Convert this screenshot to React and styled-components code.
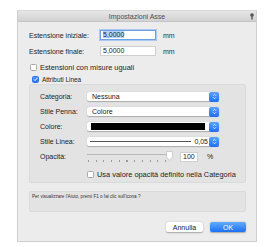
import React from 'react';
import styled, { createGlobalStyle } from 'styled-components';

const GlobalStyle = createGlobalStyle`
  * { box-sizing: border-box; }
  html, body { margin: 0; padding: 0; background: #fff; }
  body { font-family: "Liberation Sans", Arial, sans-serif; color: #222; }
`;

const Dialog = styled.div`
  margin: 10px 0 0 17px;
  width: 240px;
  height: 232px;
  background: #ececec;
  border: 1px solid #cfcfcf;
  border-top-color: #d8d8d8;
  display: flex;
  flex-direction: column;
`;

const TitleBar = styled.div`
  height: 11px;
  display: grid;
  grid-template-columns: 1fr auto 1fr;
  align-items: center;
  background: linear-gradient(#e6e6e6, #d2d2d2);
  border-bottom: 1px solid #c4c4c4;
  font-size: 7px;
  color: #4d4d4d;
`;

const Title = styled.span`
  grid-column: 2;
  line-height: 11px;
`;

const HelpIcon = styled.svg`
  justify-self: end;
  margin-right: 2px;
`;

const Body = styled.div`
  padding: 5px 10px 0 11px;
  display: flex;
  flex-direction: column;
  font-size: 7px;
`;

const FieldRow = styled.div`
  display: flex;
  align-items: center;
  height: 16px;
`;

const Label = styled.span`
  width: ${p => p.$w}px;
  flex: none;
  color: #222;
`;

const TextInput = styled.div`
  width: 56px;
  height: 10px;
  background: #fff;
  border: 1px solid ${p => (p.$focus ? '#6fa0e6' : '#d0d0d0')};
  box-shadow: ${p => (p.$focus ? '0 0 0 1px #a9c8f2' : 'none')};
  padding-left: 2px;
  font-size: 7px;
  line-height: 8px;
  color: #222;
`;

const Selected = styled.span`
  background: #b5d3fb;
`;

const Unit = styled.span`
  margin-left: 7px;
  color: #333;
`;

const CheckRow = styled.div`
  display: flex;
  align-items: center;
  height: ${p => p.$h}px;
  margin-top: ${p => p.$mt || 0}px;
  padding-left: ${p => p.$pl || 0}px;
`;

const Box = styled.span`
  width: 7px;
  height: 7px;
  flex: none;
  border-radius: 1.5px;
  border: 1px solid ${p => (p.$on ? '#2b74ef' : '#a8a8a8')};
  background: ${p => (p.$on ? 'linear-gradient(#4e95f8, #246ef0)' : '#fff')};
  display: flex;
  align-items: center;
  justify-content: center;
  margin-right: ${p => p.$gap}px;
`;

const CheckText = styled.span`
  font-size: ${p => p.$fs}px;
  color: #222;
`;

const Group = styled.div`
  height: 99px;
  background: #e3e3e3;
  border: 1px solid #dadada;
  border-radius: 2px;
  padding: 4px 0 0 10px;
  display: flex;
  flex-direction: column;
`;

const GroupRow = styled.div`
  display: flex;
  align-items: center;
  height: 15px;
`;

const Select = styled.div`
  width: 132px;
  height: 9px;
  background: #fff;
  border-radius: 2px;
  box-shadow: 0 0.5px 1px rgba(0, 0, 0, 0.25);
  display: flex;
  align-items: center;
`;

const SelectBody = styled.div`
  flex: 1;
  height: 100%;
  display: flex;
  align-items: center;
  padding: 0 ${p => p.$pr || 0}px 0 ${p => p.$pl}px;
  font-size: 7px;
  color: #222;
`;

const Swatch = styled.div`
  flex: 1;
  height: 7px;
  background: #000;
`;

const LineSample = styled.div`
  flex: 1;
  height: 1px;
  background: #555;
  margin-right: 3px;
`;

const Stepper = styled.div`
  width: 10px;
  height: 10px;
  flex: none;
  border-radius: 2px;
  background: linear-gradient(#5aa3fb, #1e6ef3);
  display: flex;
  align-items: center;
  justify-content: center;
`;

const Slider = styled.div`
  position: relative;
  width: 86px;
  height: 11px;
`;

const Track = styled.div`
  position: absolute;
  left: 0;
  right: 4px;
  top: 3px;
  height: 1px;
  background: #b8b8b8;
`;

const Ticks = styled.div`
  position: absolute;
  left: 1px;
  right: 0;
  top: 9px;
  height: 2px;
  background: repeating-linear-gradient(
    to right,
    #9a9a9a 0,
    #9a9a9a 1px,
    transparent 1px,
    transparent 7.7px
  );
`;

const Thumb = styled.svg`
  position: absolute;
  left: 79px;
  top: 0;
`;

const SmallInput = styled.div`
  width: 18px;
  height: 10px;
  margin-left: 7px;
  background: #fff;
  border: 1px solid #d0d0d0;
  padding-left: 2px;
  font-size: 7px;
  line-height: 8px;
`;

const Percent = styled.span`
  margin-left: 9px;
  font-size: 7px;
`;

const InfoBox = styled.div`
  margin-top: 8px;
  height: 21px;
  background: #e3e3e3;
  border: 1px solid #dadada;
  border-radius: 2px;
  padding: 2px 2px;
  font-size: 4.6px;
  color: #333;
`;

const Buttons = styled.div`
  margin-top: 10px;
  display: flex;
  justify-content: flex-end;
  gap: 7px;
`;

const Button = styled.div`
  width: ${p => p.$w}px;
  height: 10px;
  border-radius: 2px;
  font-size: 7px;
  display: flex;
  align-items: center;
  justify-content: center;
  color: ${p => (p.$primary ? '#fff' : '#222')};
  background: ${p => (p.$primary ? 'linear-gradient(#63acfb, #1c6ff4)' : '#fff')};
  box-shadow: 0 0.5px 1.5px rgba(0, 0, 0, 0.3);
`;

const Check = () => (
  <svg width="5" height="5" viewBox="0 0 10 10">
    <path d="M2 5.2 L4.2 7.4 L8.2 2.4" fill="none" stroke="#fff" strokeWidth="1.8" strokeLinecap="round" strokeLinejoin="round" />
  </svg>
);

const Arrows = () => (
  <svg width="5" height="7" viewBox="0 0 10 14">
    <path d="M2.5 5 L5 2.5 L7.5 5 M2.5 9 L5 11.5 L7.5 9" fill="none" stroke="#fff" strokeWidth="1.5" strokeLinecap="round" strokeLinejoin="round" />
  </svg>
);

const SelectControl = ({ children, pl = 5, pr = 0 }) => (
  <Select>
    <SelectBody $pl={pl} $pr={pr}>{children}</SelectBody>
    <Stepper><Arrows /></Stepper>
  </Select>
);

export default function App() {
  return (
    <>
      <GlobalStyle />
      <Dialog>
        <TitleBar>
          <Title>Impostazioni Asse</Title>
          <HelpIcon width="4" height="7" viewBox="0 0 4 7">
            <circle cx="2" cy="2" r="1.8" fill="#555" />
            <rect x="1.3" y="3" width="1.4" height="3.5" fill="#555" />
          </HelpIcon>
        </TitleBar>
        <Body>
          <FieldRow>
            <Label $w={71}>Estensione iniziale:</Label>
            <TextInput $focus><Selected>5,0000</Selected></TextInput>
            <Unit>mm</Unit>
          </FieldRow>
          <FieldRow>
            <Label $w={71}>Estensione finale:</Label>
            <TextInput>5,0000</TextInput>
            <Unit>mm</Unit>
          </FieldRow>
          <CheckRow $h={12} $mt={2} $pl={1}>
            <Box $gap={3} />
            <CheckText $fs={7.4}>Estensioni con misure uguali</CheckText>
          </CheckRow>
          <CheckRow $h={10} $mt={1} $pl={3}>
            <Box $on $gap={3}><Check /></Box>
            <CheckText $fs={6.4}>Attributi Linea</CheckText>
          </CheckRow>
          <Group>
            <GroupRow>
              <Label $w={47}>Categoria:</Label>
              <SelectControl>Nessuna</SelectControl>
            </GroupRow>
            <GroupRow>
              <Label $w={47}>Stile Penna:</Label>
              <SelectControl>Colore</SelectControl>
            </GroupRow>
            <GroupRow>
              <Label $w={47}>Colore:</Label>
              <SelectControl pl={4} pr={4}><Swatch /></SelectControl>
            </GroupRow>
            <GroupRow>
              <Label $w={47}>Stile Linea:</Label>
              <SelectControl pl={3} pr={1}><LineSample />0,05</SelectControl>
            </GroupRow>
            <GroupRow>
              <Label $w={47}>Opacità:</Label>
              <Slider>
                <Track />
                <Ticks />
                <Thumb width="7" height="10" viewBox="0 0 7 10">
                  <path d="M1 0.5 H6 Q6.5 0.5 6.5 1 V6 L3.5 9.3 L0.5 6 V1 Q0.5 0.5 1 0.5 Z" fill="#fff" stroke="#b5b5b5" strokeWidth="0.6" />
                </Thumb>
              </Slider>
              <SmallInput>100</SmallInput>
              <Percent>%</Percent>
            </GroupRow>
            <CheckRow $h={14} $mt={3} $pl={47}>
              <Box $gap={3} />
              <CheckText $fs={7.4}>Usa valore opacità definito nella Categoria</CheckText>
            </CheckRow>
          </Group>
          <InfoBox>Per visualizzare l'Aiuto, premi F1 o fai clic sull'icona ?</InfoBox>
          <Buttons>
            <Button $w={37}>Annulla</Button>
            <Button $w={36} $primary>OK</Button>
          </Buttons>
        </Body>
      </Dialog>
    </>
  );
}
